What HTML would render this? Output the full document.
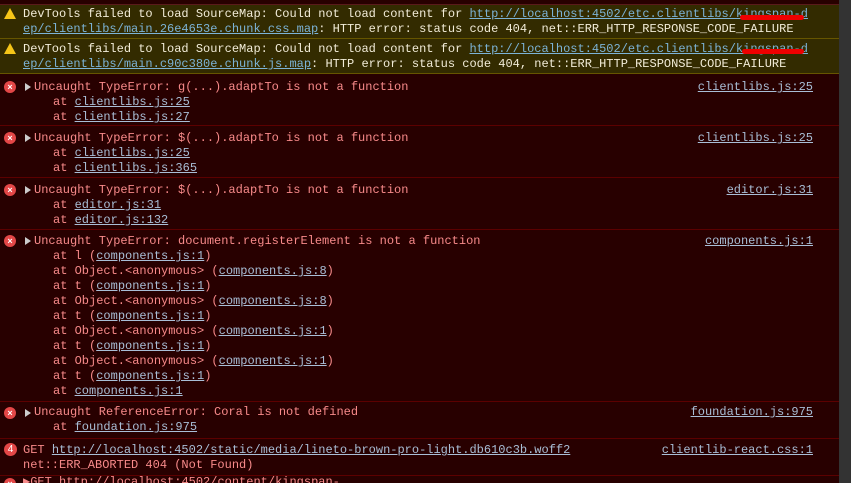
<!DOCTYPE html>
<html><head><meta charset="utf-8"><style>
html,body{margin:0;padding:0;overflow:hidden;width:851px;height:483px}
body{background:#280000;position:relative;font-family:"Liberation Mono","DejaVu Sans Mono",monospace;font-size:12px;}
.sb{position:absolute;left:839px;top:0;width:12px;height:483px;background:#333}
.top{position:absolute;left:0;top:0;width:839px;height:4px;background:#280000;border-bottom:1px solid #5a1a1a}
.warn{position:absolute;left:0;width:839px;background:#332b00;border-bottom:1px solid #665500}
.err{position:absolute;left:0;width:839px;border-bottom:1px solid #5c0000;background:#280000}
.l{position:absolute;white-space:pre;line-height:15px;height:15px}
.w{color:#f2ecd8}
.r{color:#f88a8a}
a{text-decoration:underline}
.wl{color:#7cb3d6}
.el{color:#a9bed6}
.rt{position:absolute;right:26px;white-space:pre;line-height:15px}
.ico{position:absolute;left:4px;width:12px;height:12px;border-radius:50%;background:#e34747;color:#fff;font-size:9px;line-height:12px;text-align:center;font-family:"Liberation Sans",sans-serif;font-weight:bold}
.tri{position:absolute;left:4px;width:0;height:0;border-left:6px solid transparent;border-right:6px solid transparent;border-bottom:11px solid #f5c518}
.arr{position:absolute;left:25px;width:0;height:0;border-top:4px solid transparent;border-bottom:4px solid transparent;border-left:6px solid #ccc}
.red{position:absolute;height:5px;background:#e00;border-radius:3px}
</style></head><body>
<div class="top"></div>

<div class="warn" style="top:5px;height:33px">
 <div class="tri" style="top:3px"></div>
 <div class="l w" style="left:23px;top:2px">DevTools failed to load SourceMap: Could not load content for <a class="wl">http://localhost:4502/etc.clientlibs/kingspan-d</a></div>
 <div class="l w" style="left:23px;top:17px"><a class="wl">ep/clientlibs/main.26e4653e.chunk.css.map</a>: HTTP error: status code 404, net::ERR_HTTP_RESPONSE_CODE_FAILURE</div>
 <div class="red" style="left:740px;top:10px;width:64px"></div>
</div>
<div class="warn" style="top:39px;height:34px">
 <div class="tri" style="top:4px"></div>
 <div class="l w" style="left:23px;top:3px">DevTools failed to load SourceMap: Could not load content for <a class="wl">http://localhost:4502/etc.clientlibs/kingspan-d</a></div>
 <div class="l w" style="left:23px;top:18px"><a class="wl">ep/clientlibs/main.c90c380e.chunk.js.map</a>: HTTP error: status code 404, net::ERR_HTTP_RESPONSE_CODE_FAILURE</div>
 <div class="red" style="left:742px;top:10px;width:62px"></div>
</div>

<div class="err" style="top:74px;height:51px">
 <div class="ico" style="top:7px">×</div><div class="arr" style="top:9px"></div>
 <div class="l r" style="left:34px;top:6px">Uncaught TypeError: g(...).adaptTo is not a function</div>
 <div class="rt" style="top:6px"><a class="el">clientlibs.js:25</a></div>
 <div class="l r" style="left:53px;top:21px">at <a class="el">clientlibs.js:25</a></div>
 <div class="l r" style="left:53px;top:36px">at <a class="el">clientlibs.js:27</a></div>
</div>
<div class="err" style="top:126px;height:51px">
 <div class="ico" style="top:6px">×</div><div class="arr" style="top:8px"></div>
 <div class="l r" style="left:34px;top:5px">Uncaught TypeError: $(...).adaptTo is not a function</div>
 <div class="rt" style="top:5px"><a class="el">clientlibs.js:25</a></div>
 <div class="l r" style="left:53px;top:20px">at <a class="el">clientlibs.js:25</a></div>
 <div class="l r" style="left:53px;top:35px">at <a class="el">clientlibs.js:365</a></div>
</div>
<div class="err" style="top:178px;height:51px">
 <div class="ico" style="top:6px">×</div><div class="arr" style="top:8px"></div>
 <div class="l r" style="left:34px;top:5px">Uncaught TypeError: $(...).adaptTo is not a function</div>
 <div class="rt" style="top:5px"><a class="el">editor.js:31</a></div>
 <div class="l r" style="left:53px;top:20px">at <a class="el">editor.js:31</a></div>
 <div class="l r" style="left:53px;top:35px">at <a class="el">editor.js:132</a></div>
</div>
<div class="err" style="top:230px;height:171px">
 <div class="ico" style="top:5px">×</div><div class="arr" style="top:7px"></div>
 <div class="l r" style="left:34px;top:4px">Uncaught TypeError: document.registerElement is not a function</div>
 <div class="rt" style="top:4px"><a class="el">components.js:1</a></div>
 <div class="l r" style="left:53px;top:19px">at l (<a class="el">components.js:1</a>)</div>
 <div class="l r" style="left:53px;top:34px">at Object.&lt;anonymous&gt; (<a class="el">components.js:8</a>)</div>
 <div class="l r" style="left:53px;top:49px">at t (<a class="el">components.js:1</a>)</div>
 <div class="l r" style="left:53px;top:64px">at Object.&lt;anonymous&gt; (<a class="el">components.js:8</a>)</div>
 <div class="l r" style="left:53px;top:79px">at t (<a class="el">components.js:1</a>)</div>
 <div class="l r" style="left:53px;top:94px">at Object.&lt;anonymous&gt; (<a class="el">components.js:1</a>)</div>
 <div class="l r" style="left:53px;top:109px">at t (<a class="el">components.js:1</a>)</div>
 <div class="l r" style="left:53px;top:124px">at Object.&lt;anonymous&gt; (<a class="el">components.js:1</a>)</div>
 <div class="l r" style="left:53px;top:139px">at t (<a class="el">components.js:1</a>)</div>
 <div class="l r" style="left:53px;top:154px">at <a class="el">components.js:1</a></div>
</div>
<div class="err" style="top:402px;height:36px">
 <div class="ico" style="top:5px">×</div><div class="arr" style="top:7px"></div>
 <div class="l r" style="left:34px;top:3px">Uncaught ReferenceError: Coral is not defined</div>
 <div class="rt" style="top:3px"><a class="el">foundation.js:975</a></div>
 <div class="l r" style="left:53px;top:18px">at <a class="el">foundation.js:975</a></div>
</div>
<div class="err" style="top:439px;height:36px">
 <div class="ico" style="top:4px;width:13px;height:13px;line-height:13px;font-size:10px;font-weight:normal">4</div>
 <div class="l r" style="left:23px;top:4px">GET <a class="el">http://localhost:4502/static/media/lineto-brown-pro-light.db610c3b.woff2</a></div>
 <div class="rt" style="top:4px"><a class="el">clientlib-react.css:1</a></div>
 <div class="l r" style="left:23px;top:19px">net::ERR_ABORTED 404 (Not Found)</div>
</div>
<div class="ico" style="top:478px">×</div>
<div class="l r" style="left:23px;top:475px">▶GET http://localhost:4502/content/kingspan-...</div>
<div class="sb"></div>
</body></html>
